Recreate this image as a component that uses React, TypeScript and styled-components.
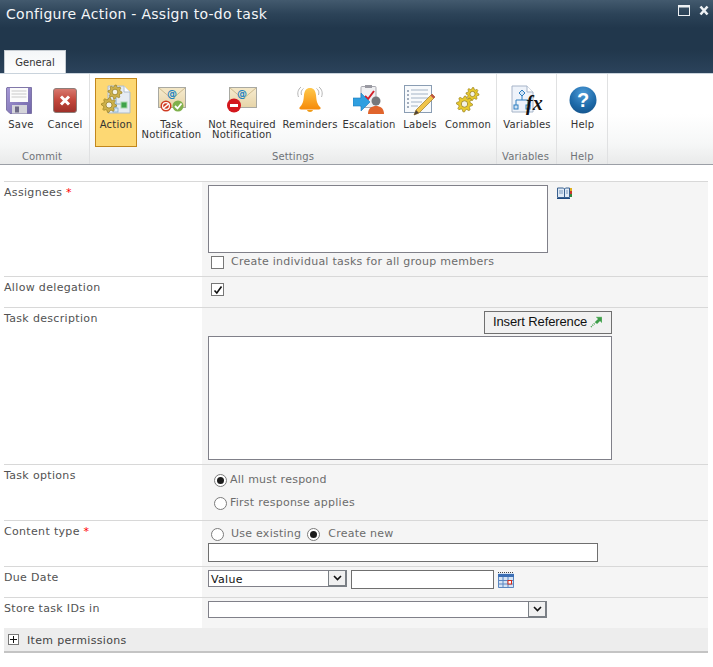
import React from "react";
import styled, { createGlobalStyle } from "styled-components";

const GlobalStyle = createGlobalStyle`
    html, body {
        margin: 0;
        padding: 0;
        background: #fff;
    }
    body {
        width: 713px;
        height: 667px;
        overflow: hidden;
        font-family: "DejaVu Sans", Verdana, sans-serif;
    }
`;

const TitleBar = styled.div`
    height: 73px;
    box-sizing: border-box;
    background: linear-gradient(#435a6e 0, #2c4358 14px, #21374c 28px, #21374c 50px, #2b435b 73px);
    display: flex;
    flex-direction: column;
    justify-content: space-between;
`;

const TitleRow = styled.div`
    display: flex;
    justify-content: space-between;
    padding: 4px 4px 0 6px;
`;

const Title = styled.div`
    color: #f4f6f8;
    font-size: 14px;
    line-height: 20px;
    letter-spacing: 0.28px;
`;

const WindowButtons = styled.div`
    display: flex;
    gap: 9px;
    padding-top: 1px;
    height: 12px;
`;

const Tab = styled.div`
    align-self: flex-start;
    margin-left: 4px;
    width: 62px;
    height: 23px;
    box-sizing: border-box;
    background: linear-gradient(#f4f6f8, #fff);
    border: 1px solid #c6ccd2;
    border-bottom: none;
    color: #333;
    font-size: 10px;
    line-height: 24px;
    text-align: center;
`;

const Ribbon = styled.div`
    display: flex;
    height: 92px;
    box-sizing: border-box;
    border-top: 1px solid #c9d3dc;
    border-bottom: 1px solid #9b9fa6;
    background: linear-gradient(#fff 0, #fff 40px, #f6f7f7 70px, #e9eaea 90px);
`;

const Group = styled.div<{ $width: number }>`
    width: ${(p) => p.$width}px;
    box-sizing: border-box;
    padding-top: 4px;
    display: flex;
    flex-direction: column;
    border-right: 1px solid #e0e1e2;
`;

const GroupButtons = styled.div<{ $pad?: number }>`
    display: flex;
    height: 69px;
    padding-left: ${(p) => p.$pad ?? 0}px;
`;

const GroupName = styled.div<{ $shift?: number }>`
    color: #6f7378;
    font-size: 10px;
    line-height: 18px;
    letter-spacing: 0.15px;
    text-align: center;
    margin-top: 1px;
    padding-right: ${(p) => p.$shift ?? 0}px;
`;

const RibbonButton = styled.div<{ $width: number; $gap?: number; $active?: boolean }>`
    width: ${(p) => p.$width}px;
    margin-right: ${(p) => p.$gap ?? 0}px;
    box-sizing: border-box;
    height: 69px;
    display: flex;
    flex-direction: column;
    align-items: center;
    flex-shrink: 0;
    border: 1px solid ${(p) => (p.$active ? "#c2871c" : "transparent")};
    background: ${(p) => (p.$active ? "#fdd873" : "transparent")};
`;

const IconSlot = styled.div<{ $shift?: number }>`
    height: 36px;
    margin-top: 3px;
    padding-right: ${(p) => p.$shift ?? 0}px;
    display: flex;
    align-items: center;
    justify-content: center;
`;

const ButtonText = styled.div`
    color: #333;
    font-size: 10px;
    line-height: 10px;
    letter-spacing: 0.2px;
    text-align: center;
    white-space: pre;
    margin-top: 2px;
`;

const Form = styled.div`
    margin: 16px 5px 0 4px;
    border-bottom: 2px solid #c4c4c4;
`;

const Row = styled.div<{ $height: number }>`
    height: ${(p) => p.$height}px;
    box-sizing: border-box;
    display: grid;
    grid-template-columns: 198px 1fr;
    border-top: 1px solid #d8d8d8;
`;

const Label = styled.div`
    color: #525252;
    font-size: 11px;
    line-height: 13px;
    letter-spacing: 0.33px;
    padding-top: 4px;
`;

const Star = styled.span`
    color: #f00;
`;

const Field = styled.div<{ $top?: number }>`
    background: #f5f5f5;
    padding: ${(p) => p.$top ?? 3}px 0 0 6px;
`;

const Line = styled.div<{ $top?: number; $left?: number; $gap?: number; $align?: string }>`
    display: flex;
    align-items: ${(p) => p.$align ?? "center"};
    margin-top: ${(p) => p.$top ?? 0}px;
    margin-left: ${(p) => p.$left ?? 0}px;
    gap: ${(p) => p.$gap ?? 0}px;
`;

const Box = styled.div<{ $width: number; $height: number; $color?: string }>`
    width: ${(p) => p.$width}px;
    height: ${(p) => p.$height}px;
    box-sizing: border-box;
    flex-shrink: 0;
    background: #fff;
    border: 1px solid ${(p) => p.$color ?? "#808089"};
`;

const Hint = styled.span<{ $left?: number; $right?: number }>`
    color: #6c6c6c;
    font-size: 11px;
    line-height: 13px;
    letter-spacing: 0.25px;
    margin: -2px ${(p) => p.$right ?? 0}px 0 ${(p) => p.$left ?? 0}px;
`;

const Check = styled.span`
    width: 13px;
    height: 13px;
    box-sizing: border-box;
    flex-shrink: 0;
    display: flex;
    align-items: center;
    justify-content: center;
    background: #fff;
    border: 1px solid #777;
`;

const Radio = styled.span<{ $on?: boolean }>`
    width: 13px;
    height: 13px;
    box-sizing: border-box;
    flex-shrink: 0;
    border-radius: 50%;
    display: flex;
    align-items: center;
    justify-content: center;
    background: #fff;
    border: 1px solid #7b7b7b;
    &::after {
        content: "";
        width: 7px;
        height: 7px;
        border-radius: 50%;
        background: ${(p) => (p.$on ? "#1c1c1c" : "transparent")};
    }
`;

const InsertButton = styled.div`
    margin-left: 276px;
    width: 128px;
    height: 23px;
    box-sizing: border-box;
    display: flex;
    align-items: center;
    padding: 0 0 2px 8px;
    gap: 3px;
    background: #f1f1f1;
    border: 1px solid #707070;
    color: #111;
    font-family: "Liberation Sans", Arial, sans-serif;
    font-size: 13px;
    letter-spacing: -0.12px;
`;

const SelectFrame = styled.div<{ $width: number; $height: number }>`
    width: ${(p) => p.$width}px;
    height: ${(p) => p.$height}px;
    box-sizing: border-box;
    display: flex;
    flex-shrink: 0;
    background: #fff;
    border: 1px solid #808089;
`;

const SelectValue = styled.div`
    flex: 1;
    color: #111;
    font-size: 11px;
    line-height: 17px;
    letter-spacing: 0.35px;
    padding-left: 2px;
`;

const SelectArrow = styled.div`
    width: 19px;
    box-sizing: border-box;
    display: flex;
    align-items: center;
    justify-content: center;
    background: #f0f0f0;
    border: 1px solid #7a7f85;
    border-width: 1px 2px 2px 1px;
    margin: -1px -1px -1px 0;
`;

const Section = styled.div`
    height: 23px;
    display: flex;
    align-items: center;
    padding-left: 4px;
    gap: 8px;
    background: #ededed;
`;

const Expander = styled.span`
    width: 11px;
    height: 11px;
    box-sizing: border-box;
    display: flex;
    align-items: center;
    justify-content: center;
    background: #fff;
    border: 1px solid #777;
`;

const SectionText = styled.span`
    color: #444;
    font-size: 11px;
    letter-spacing: 0.33px;
    padding-top: 2px;
`;

const Gear = ({ cx, cy, r, fill }: { cx: number; cy: number; r: number; fill: string }) => {
    let d = "";
    const teeth = 8;
    for (let i = 0; i < teeth * 4; i++) {
        const a = (i / (teeth * 4)) * Math.PI * 2;
        const rad = i % 4 < 2 ? r : r * 0.74;
        d += `${i === 0 ? "M" : "L"}${(cx + Math.cos(a) * rad).toFixed(2)} ${(cy + Math.sin(a) * rad).toFixed(2)}`;
    }
    return (
        <g>
            <path d={d + "Z"} fill={fill} stroke="#8c7412" strokeWidth="0.6" />
            <circle cx={cx} cy={cy} r={r * 0.4} fill="#f4f2e6" stroke="#8c7412" strokeWidth="0.7" />
        </g>
    );
};

const SaveIcon = () => (
    <svg width="26" height="27" viewBox="0 0 26 27">
        <defs>
            <linearGradient id="saveBody" x1="0" y1="0" x2="1" y2="1">
                <stop offset="0" stopColor="#a79ad6" />
                <stop offset="1" stopColor="#6f64a8" />
            </linearGradient>
        </defs>
        <path d="M1 .5H25.5V26.5H4L.5 23V1Z" fill="url(#saveBody)" stroke="#6d6399" strokeWidth=".8" />
        <rect x="4" y="1" width="18" height="14" fill="#fbfbfb" />
        <path d="M5.5 4H20.5M5.5 7H20.5M5.5 10H20.5" stroke="#c9c9c9" />
        <rect x="6" y="18" width="15" height="8.5" fill="#d4d4da" />
        <rect x="9" y="19.5" width="4" height="6" fill="#6e6a86" />
    </svg>
);

const CancelIcon = () => (
    <svg width="24" height="25" viewBox="0 0 24 25">
        <defs>
            <linearGradient id="cancelBody" x1="0" y1="0" x2="0" y2="1">
                <stop offset="0" stopColor="#d87a70" />
                <stop offset=".5" stopColor="#c2463a" />
                <stop offset="1" stopColor="#9d2f28" />
            </linearGradient>
        </defs>
        <rect x=".5" y=".5" width="23" height="24" rx="2.5" fill="url(#cancelBody)" stroke="#8d7d78" />
        <path d="M8 8.5L16 16.5M16 8.5L8 16.5" stroke="#fff" strokeWidth="3" />
    </svg>
);

const ActionIcon = () => (
    <svg width="30" height="32" viewBox="0 0 30 32">
        <path d="M7 2H23L29 8V29H7Z" fill="#e6ecf3" stroke="#aebccb" />
        <path d="M23 2V8H29" fill="#fff" stroke="#aebccb" />
        <path d="M15 14V20H23M15 20V25" fill="none" stroke="#8fb4d4" strokeWidth="1.2" />
        <rect x="20" y="18" width="6" height="6" fill="#3fa34a" stroke="#a9d8ae" />
        <rect x="12" y="24" width="5" height="4" fill="#d7e8f6" stroke="#7aa3c8" strokeWidth=".7" />
        <Gear cx={14} cy={8} r={7} fill="#cdb04a" />
        <Gear cx={8} cy={21} r={7.5} fill="#cdb04a" />
    </svg>
);

const Envelope = ({ badges }: { badges: "both" | "stop" }) => (
    <svg width="30" height="26" viewBox="0 0 30 26">
        <defs>
            <linearGradient id={"env" + badges} x1="0" y1="0" x2="0" y2="1">
                <stop offset="0" stopColor="#f7ecd0" />
                <stop offset="1" stopColor="#e6d4a8" />
            </linearGradient>
        </defs>
        <rect x={badges === "both" ? 1.5 : 2.5} y=".5" width="27" height="20" fill={"url(#env" + badges + ")"} stroke="#a9a9a2" />
        <path d={badges === "both" ? "M2 1L15 12L28 1" : "M3 1L16 12L29 1"} fill="#f3e6c4" stroke="#cdbb90" />
        <text x="15" y="10" textAnchor="middle" fontSize="10" fontWeight="700" fontFamily="DejaVu Sans" fill="#1d83c2">@</text>
        {badges === "both" ? (
            <>
                <circle cx="9" cy="19" r="5.5" fill="#cf3b22" />
                <path d="M6 21.5L12 16.5" stroke="#fff" strokeWidth="1.6" />
                <circle cx="9" cy="19" r="3.4" fill="none" stroke="#fff" strokeWidth="1.2" />
                <circle cx="21" cy="19" r="5.5" fill="#7fb04c" />
                <path d="M18 19L20.5 21.5L24.5 16.5" fill="none" stroke="#fff" strokeWidth="1.8" />
            </>
        ) : (
            <>
                <circle cx="7" cy="18.5" r="7" fill="#d3161c" />
                <rect x="3" y="17" width="8" height="3" fill="#fff" />
            </>
        )}
    </svg>
);

const BellIcon = () => (
    <svg width="28" height="28" viewBox="0 0 28 28">
        <defs>
            <linearGradient id="bell" x1="0" y1="0" x2="0" y2="1">
                <stop offset="0" stopColor="#ffc84a" />
                <stop offset="1" stopColor="#f58a0a" />
            </linearGradient>
        </defs>
        <path d="M5.500 9C4.500 6 5.500 4 7.500 2.500M2.500 11C1 7 2 3.500 5 1M22.500 9C23.500 6 22.500 4 20.500 2.500M25.500 11C27 7 26 3.500 23 1" fill="none" stroke="#b5b5b5" />
        <path d="M14 2C10.500 2 8.500 4.500 8 9C7.500 15 7 18 3.500 21.500C3 22.500 4 23.500 5 23.500H23C24 23.500 25 22.500 24.500 21.500C21 18 20.500 15 20 9C19.500 4.500 17.500 2 14 2Z" fill="url(#bell)" />
        <path d="M11 24H17C16.500 26.500 11.500 26.500 11 24Z" fill="#f19a15" />
    </svg>
);

const EscalationIcon = () => (
    <svg width="32" height="32" viewBox="0 0 32 32">
        <rect x="8" y="2.500" width="15" height="21" rx="1" fill="#f0f0f2" stroke="#a9a9b0" />
        <rect x="12" y="1" width="7" height="3" fill="#9a9aa2" />
        <path d="M12 12L15 15L21 7" fill="none" stroke="#d3202a" strokeWidth="2" />
        <path d="M0 14H8V9L17 18L8 27V22H0Z" fill="#2f9fe0" stroke="#1d78b8" strokeWidth=".6" />
        <circle cx="23" cy="17" r="4.500" fill="#76787c" />
        <path d="M15 30C15 24 19 22 23 22C27 22 31 24 31 30Z" fill="#e0642c" />
    </svg>
);

const LabelsIcon = () => (
    <svg width="32" height="32" viewBox="0 0 32 32">
        <rect x=".5" y="1.500" width="27" height="27" fill="#f8fafc" stroke="#8a9db3" />
        <path d="M3 7H5M3 11H5M3 15H5M3 19H5M3 23H5" stroke="#4a5f7a" />
        <path d="M7 6H24M7 10H24M7 14H24M7 18H18M7 22H14" stroke="#a4b4c6" />
        <path d="M28 10L31 13L15 29L10 31L12 26Z" fill="#f0c44a" stroke="#9c7a25" strokeWidth=".7" />
        <path d="M28 10L31 13L29.500 14.500L26.500 11.500Z" fill="#c0504a" />
        <path d="M12 26L15 29L10 31Z" fill="#50433a" />
    </svg>
);

const CommonIcon = () => (
    <svg width="24" height="26" viewBox="0 0 24 26">
        <Gear cx={16.500} cy={7} r={6.500} fill="#e8c92e" />
        <Gear cx={8.500} cy={17} r={8} fill="#e8c92e" />
    </svg>
);

const VariablesIcon = () => (
    <svg width="32" height="31" viewBox="0 0 32 31">
        <path d="M1 1H16L22 7V27H1Z" fill="#eef3fa" stroke="#a6b4c8" />
        <path d="M16 1V7H22" fill="#fff" stroke="#a6b4c8" />
        <path d="M11 9V15M5 20V15H17V20" fill="none" stroke="#2f7fc0" />
        <path d="M11 5L14 8L11 11L8 8Z" fill="#cfe3f5" stroke="#2f7fc0" />
        <rect x="3" y="20" width="4" height="4" fill="#cfe3f5" stroke="#2f7fc0" />
        <rect x="15" y="20" width="4" height="4" fill="#cfe3f5" stroke="#2f7fc0" />
        <text x="15" y="25" fontFamily="Liberation Serif" fontStyle="italic" fontWeight="700" fontSize="20" fill="#111">fx</text>
    </svg>
);

const HelpIcon = () => (
    <svg width="28" height="28" viewBox="0 0 28 28">
        <defs>
            <radialGradient id="helpBall" cx=".5" cy=".25" r=".85">
                <stop offset="0" stopColor="#4c9ad6" />
                <stop offset=".6" stopColor="#1d69a8" />
                <stop offset="1" stopColor="#124f85" />
            </radialGradient>
        </defs>
        <circle cx="14" cy="14" r="13.500" fill="url(#helpBall)" />
        <text x="14" y="21" textAnchor="middle" fontFamily="Liberation Sans" fontWeight="700" fontSize="20" fill="#fff">?</text>
    </svg>
);

const MaximizeIcon = () => (
    <svg width="12" height="11" viewBox="0 0 12 11">
        <rect x=".5" y=".5" width="11" height="10" fill="none" stroke="#eef1f4" />
        <rect x="0" y="0" width="12" height="2.500" fill="#eef1f4" />
    </svg>
);

const CloseIcon = () => (
    <svg width="10" height="11" viewBox="0 0 10 11">
        <path d="M1.500 1.500L8.500 9.500M8.500 1.500L1.500 9.500" stroke="#eef1f4" strokeWidth="2.600" />
    </svg>
);

const BookIcon = () => (
    <svg width="15" height="12" viewBox="0 0 15 12">
        <path d="M.5 1H6.500L7.500 2L8.500 1H12.500V10.500H.5Z" fill="#dfeaf6" stroke="#39608f" />
        <path d="M7.500 2V10" stroke="#39608f" />
        <path d="M2 4H6M2 6H6M9 4H11M9 6H11" stroke="#7a99bd" />
        <path d="M0 11.500H13" stroke="#1f4a80" />
        <rect x="13" y="1" width="2" height="3" fill="#e0b020" />
        <rect x="13" y="4" width="2" height="3" fill="#c8342c" />
        <rect x="13" y="7" width="2" height="3" fill="#2f8a3c" />
    </svg>
);

const RefArrow = () => (
    <svg width="12" height="12" viewBox="0 0 12 12">
        <path d="M1 11L7 5" stroke="#3f9c4a" strokeDasharray="1 1" strokeWidth="1.500" />
        <path d="M6 1H12V7L10 5L7 8L5 6L8 3Z" fill="#3f9c4a" stroke="#8ccf92" strokeWidth=".5" />
    </svg>
);

const CalendarIcon = () => (
    <svg width="16" height="16" viewBox="0 0 16 16">
        <rect x="0" y="1" width="16" height="15" fill="#d7e4f4" />
        <path d="M0 .5H16" stroke="#444" strokeDasharray="1 1" />
        <rect x="0" y="2" width="16" height="3" fill="#3c6fb5" />
        <path d="M.5 5V15.500H15.500V5M5 5V16M10 5V16M0 8.500H16M0 12H16" fill="none" stroke="#5a86c0" />
        <rect x="10" y="8.500" width="3.500" height="3.500" fill="#fff" stroke="#d62a18" />
    </svg>
);

const Chevron = () => (
    <svg width="9" height="6" viewBox="0 0 9 6">
        <path d="M1 1L4.500 4.500L8 1" fill="none" stroke="#111" strokeWidth="1.600" />
    </svg>
);

const Tick = () => (
    <svg width="10" height="10" viewBox="0 0 10 10">
        <path d="M1.500 5.500L3.800 8L8.500 1.500" fill="none" stroke="#111" strokeWidth="1.600" />
    </svg>
);

const App = () => {
    return (
        <>
            <GlobalStyle />
            <TitleBar>
                <TitleRow>
                    <Title>Configure Action - Assign to-do task</Title>
                    <WindowButtons>
                        <MaximizeIcon />
                        <CloseIcon />
                    </WindowButtons>
                </TitleRow>
                <Tab>General</Tab>
            </TitleBar>

            <Ribbon>
                <Group $width={90}>
                    <GroupButtons $pad={4}>
                        <RibbonButton $width={34} $gap={10}>
                            <IconSlot $shift={4}><SaveIcon /></IconSlot>
                            <ButtonText>Save</ButtonText>
                        </RibbonButton>
                        <RibbonButton $width={34}>
                            <IconSlot><CancelIcon /></IconSlot>
                            <ButtonText>Cancel</ButtonText>
                        </RibbonButton>
                    </GroupButtons>
                    <GroupName $shift={5}>Commit</GroupName>
                </Group>
                <Group $width={407}>
                    <GroupButtons $pad={5}>
                        <RibbonButton $width={42} $active>
                            <IconSlot><ActionIcon /></IconSlot>
                            <ButtonText>Action</ButtonText>
                        </RibbonButton>
                        <RibbonButton $width={69}>
                            <IconSlot><Envelope badges="both" /></IconSlot>
                            <ButtonText>{"Task\nNotification"}</ButtonText>
                        </RibbonButton>
                        <RibbonButton $width={72}>
                            <IconSlot><Envelope badges="stop" /></IconSlot>
                            <ButtonText>{"Not Required\nNotification"}</ButtonText>
                        </RibbonButton>
                        <RibbonButton $width={64}>
                            <IconSlot><BellIcon /></IconSlot>
                            <ButtonText>Reminders</ButtonText>
                        </RibbonButton>
                        <RibbonButton $width={54}>
                            <IconSlot><EscalationIcon /></IconSlot>
                            <ButtonText>Escalation</ButtonText>
                        </RibbonButton>
                        <RibbonButton $width={48}>
                            <IconSlot><LabelsIcon /></IconSlot>
                            <ButtonText>Labels</ButtonText>
                        </RibbonButton>
                        <RibbonButton $width={48}>
                            <IconSlot><CommonIcon /></IconSlot>
                            <ButtonText>Common</ButtonText>
                        </RibbonButton>
                    </GroupButtons>
                    <GroupName>Settings</GroupName>
                </Group>
                <Group $width={60}>
                    <GroupButtons>
                        <RibbonButton $width={60}>
                            <IconSlot><VariablesIcon /></IconSlot>
                            <ButtonText>Variables</ButtonText>
                        </RibbonButton>
                    </GroupButtons>
                    <GroupName $shift={2}>Variables</GroupName>
                </Group>
                <Group $width={51}>
                    <GroupButtons>
                        <RibbonButton $width={51}>
                            <IconSlot><HelpIcon /></IconSlot>
                            <ButtonText>Help</ButtonText>
                        </RibbonButton>
                    </GroupButtons>
                    <GroupName>Help</GroupName>
                </Group>
            </Ribbon>

            <Form>
                <Row $height={95}>
                    <Label>Assignees <Star>*</Star></Label>
                    <Field $top={3}>
                        <Line $gap={9} $align="flex-start">
                            <Box $width={340} $height={68} />
                            <Line $top={2}><BookIcon /></Line>
                        </Line>
                        <Line $top={3} $left={3} $gap={7}>
                            <Check />
                            <Hint>Create individual tasks for all group members</Hint>
                        </Line>
                    </Field>
                </Row>
                <Row $height={31}>
                    <Label>Allow delegation</Label>
                    <Field $top={6}>
                        <Line $left={3}><Check><Tick /></Check></Line>
                    </Field>
                </Row>
                <Row $height={157}>
                    <Label>Task description</Label>
                    <Field $top={3}>
                        <InsertButton>Insert Reference <RefArrow /></InsertButton>
                        <Line $top={2}><Box $width={404} $height={124} /></Line>
                    </Field>
                </Row>
                <Row $height={56}>
                    <Label>Task options</Label>
                    <Field $top={9}>
                        <Line $left={6} $gap={3}><Radio $on /><Hint>All must respond</Hint></Line>
                        <Line $top={10} $left={6} $gap={3}><Radio /><Hint>First response applies</Hint></Line>
                    </Field>
                </Row>
                <Row $height={46}>
                    <Label>Content type <Star>*</Star></Label>
                    <Field $top={7}>
                        <Line $left={3}>
                            <Radio />
                            <Hint $left={7} $right={6}>Use existing</Hint>
                            <Radio $on />
                            <Hint $left={8}>Create new</Hint>
                        </Line>
                        <Line $top={2}><Box $width={390} $height={19} $color="#6f6f6f" /></Line>
                    </Field>
                </Row>
                <Row $height={31}>
                    <Label>Due Date</Label>
                    <Field $top={3}>
                        <Line $gap={4} $align="flex-start">
                            <SelectFrame $width={139} $height={17}>
                                <SelectValue>Value</SelectValue>
                                <SelectArrow><Chevron /></SelectArrow>
                            </SelectFrame>
                            <Box $width={143} $height={19} $color="#6f6f6f" />
                            <Line $top={2}><CalendarIcon /></Line>
                        </Line>
                    </Field>
                </Row>
                <Row $height={31}>
                    <Label>Store task IDs in</Label>
                    <Field $top={3}>
                        <SelectFrame $width={339} $height={17}>
                            <SelectValue />
                            <SelectArrow><Chevron /></SelectArrow>
                        </SelectFrame>
                    </Field>
                </Row>
                <Section>
                    <Expander>
                        <svg width="7" height="7" viewBox="0 0 7 7">
                            <path d="M3.500 0V7M0 3.500H7" stroke="#111" />
                        </svg>
                    </Expander>
                    <SectionText>Item permissions</SectionText>
                </Section>
            </Form>
        </>
    );
};

export default App;
